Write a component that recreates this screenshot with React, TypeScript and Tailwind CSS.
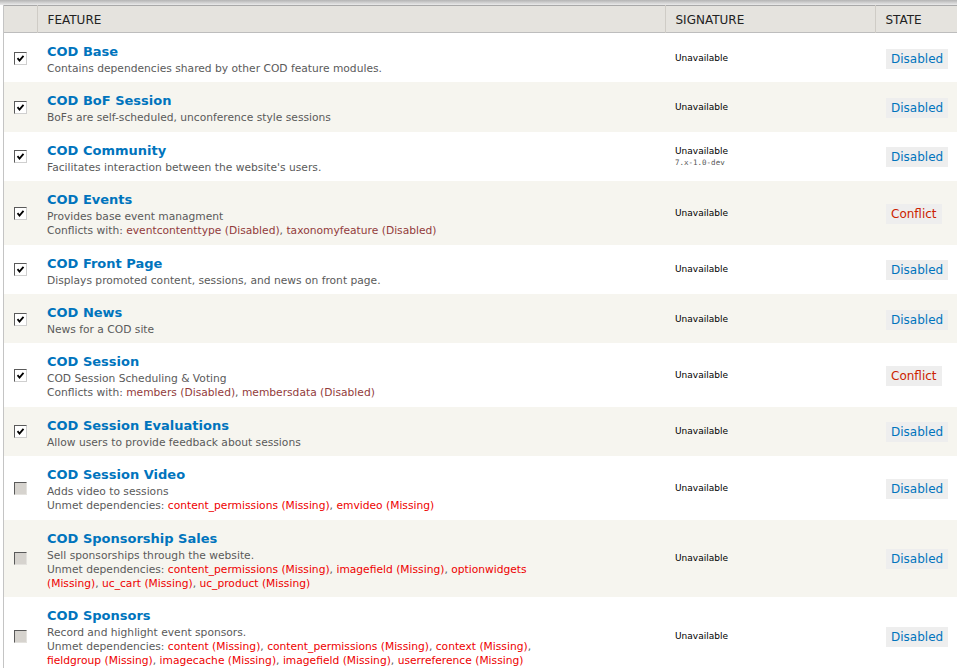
import React from 'react';

type Dep = { name: string; status: string };
type Feature = {
  title: string;
  description: string;
  checked: boolean;
  state: 'Disabled' | 'Conflict';
  version?: string;
  conflicts?: Dep[];
  unmet?: Dep[];
};

const features: Feature[] = [
  { title: 'COD Base', description: 'Contains dependencies shared by other COD feature modules.', checked: true, state: 'Disabled' },
  { title: 'COD BoF Session', description: 'BoFs are self-scheduled, unconference style sessions', checked: true, state: 'Disabled' },
  { title: 'COD Community', description: "Facilitates interaction between the website's users.", checked: true, state: 'Disabled', version: '7.x-1.0-dev' },
  {
    title: 'COD Events',
    description: 'Provides base event managment',
    checked: true,
    state: 'Conflict',
    conflicts: [
      { name: 'eventcontenttype', status: 'Disabled' },
      { name: 'taxonomyfeature', status: 'Disabled' },
    ],
  },
  { title: 'COD Front Page', description: 'Displays promoted content, sessions, and news on front page.', checked: true, state: 'Disabled' },
  { title: 'COD News', description: 'News for a COD site', checked: true, state: 'Disabled' },
  {
    title: 'COD Session',
    description: 'COD Session Scheduling & Voting',
    checked: true,
    state: 'Conflict',
    conflicts: [
      { name: 'members', status: 'Disabled' },
      { name: 'membersdata', status: 'Disabled' },
    ],
  },
  { title: 'COD Session Evaluations', description: 'Allow users to provide feedback about sessions', checked: true, state: 'Disabled' },
  {
    title: 'COD Session Video',
    description: 'Adds video to sessions',
    checked: false,
    state: 'Disabled',
    unmet: [
      { name: 'content_permissions', status: 'Missing' },
      { name: 'emvideo', status: 'Missing' },
    ],
  },
  {
    title: 'COD Sponsorship Sales',
    description: 'Sell sponsorships through the website.',
    checked: false,
    state: 'Disabled',
    unmet: [
      { name: 'content_permissions', status: 'Missing' },
      { name: 'imagefield', status: 'Missing' },
      { name: 'optionwidgets', status: 'Missing' },
      { name: 'uc_cart', status: 'Missing' },
      { name: 'uc_product', status: 'Missing' },
    ],
  },
  {
    title: 'COD Sponsors',
    description: 'Record and highlight event sponsors.',
    checked: false,
    state: 'Disabled',
    unmet: [
      { name: 'content', status: 'Missing' },
      { name: 'content_permissions', status: 'Missing' },
      { name: 'context', status: 'Missing' },
      { name: 'fieldgroup', status: 'Missing' },
      { name: 'imagecache', status: 'Missing' },
      { name: 'imagefield', status: 'Missing' },
      { name: 'userreference', status: 'Missing' },
    ],
  },
];

function Checkbox({ checked }: { checked: boolean }) {
  if (!checked) {
    return (
      <span className="inline-block w-[13px] h-[13px] border border-t-[#5a5a5a] border-l-[#5a5a5a] border-b-[#e4e2de] border-r-[#e4e2de] bg-[#d6d3ce] align-middle" />
    );
  }
  return (
    <span className="inline-flex items-center justify-center w-[13px] h-[13px] border border-t-[#5a5a5a] border-l-[#5a5a5a] border-b-[#cfcfcf] border-r-[#cfcfcf] bg-white align-middle">
      <svg width="9" height="9" viewBox="0 0 9 9">
        <path d="M1.5 4.2 L3.5 6.5 L7.5 1.8" fill="none" stroke="#000" strokeWidth="1.8" />
      </svg>
    </span>
  );
}

function DepList({ deps, color }: { deps: Dep[]; color: string }) {
  return (
    <>
      {deps.map((d, i) => (
        <React.Fragment key={d.name}>
          <span className={color}>
            {d.name} ({d.status})
          </span>
          {i < deps.length - 1 ? ', ' : ''}
        </React.Fragment>
      ))}
    </>
  );
}

export default function App() {
  return (
    <div className="w-[957px] h-[668px] overflow-hidden bg-white" style={{ fontFamily: '"DejaVu Sans", Verdana, sans-serif' }}>
      <div className="h-[5px] bg-gradient-to-b from-[#b4b4b4] to-[#ebebeb]" />
      <div className="ml-[3px] border-l border-[#c4c4c4]">
        <table className="w-[954px] border-collapse table-fixed">
          <colgroup>
            <col className="w-[33px]" />
            <col className="w-[628px]" />
            <col className="w-[210px]" />
            <col className="w-[83px]" />
          </colgroup>
          <thead>
            <tr className="bg-[#e5e3de] h-[27px] border-t border-b border-t-[#a9a9a9] border-b-[#bdbdbd]">
              <th className="border-r border-[#cfccc6]" />
              <th className="border-r border-[#cfccc6] text-left font-normal text-[12px] text-[#222] pl-[10px] pt-[2px]">FEATURE</th>
              <th className="border-r border-[#cfccc6] text-left font-normal text-[12px] text-[#222] pl-[10px] pt-[2px]">SIGNATURE</th>
              <th className="text-left font-normal text-[12px] text-[#222] pl-[10px] pt-[2px]">STATE</th>
            </tr>
          </thead>
          <tbody>
            {features.map((f, i) => (
              <tr key={f.title} className={i % 2 === 0 ? 'bg-white' : 'bg-[#f6f5ef]'}>
                <td className="align-middle pl-[10px]">
                  <Checkbox checked={f.checked} />
                </td>
                <td className="align-top pl-[10px] pt-[9px] pb-[6.4px] pr-[110px]">
                  <div className="text-[13px] leading-[20px] font-bold text-[#0074bd]">{f.title}</div>
                  <div className="text-[10.7px] leading-[14px] text-[#5a5a5a]">{f.description}</div>
                  {f.conflicts && (
                    <div className="text-[10.7px] leading-[14px] text-[#5a5a5a]">
                      Conflicts with: <DepList deps={f.conflicts} color="text-[#923b3b]" />
                    </div>
                  )}
                  {f.unmet && (
                    <div className="text-[10.7px] leading-[14px] text-[#5a5a5a]">
                      Unmet dependencies: <DepList deps={f.unmet} color="text-[#ee0000]" />
                    </div>
                  )}
                </td>
                <td className="align-middle pl-[10px]">
                  <div className="text-[9px] leading-[12px] text-black">Unavailable</div>
                  {f.version && (
                    <div className="text-[7.5px] leading-[11px] text-[#555]" style={{ fontFamily: '"DejaVu Sans Mono", monospace' }}>
                      {f.version}
                    </div>
                  )}
                </td>
                <td className="align-middle pl-[11px]">
                  <span
                    className={
                      'inline-block bg-[#eeeeee] text-[12px] leading-[20px] px-[5px] ' +
                      (f.state === 'Conflict' ? 'text-[#cc2200]' : 'text-[#0074bd]')
                    }
                  >
                    {f.state}
                  </span>
                </td>
              </tr>
            ))}
          </tbody>
        </table>
      </div>
    </div>
  );
}
